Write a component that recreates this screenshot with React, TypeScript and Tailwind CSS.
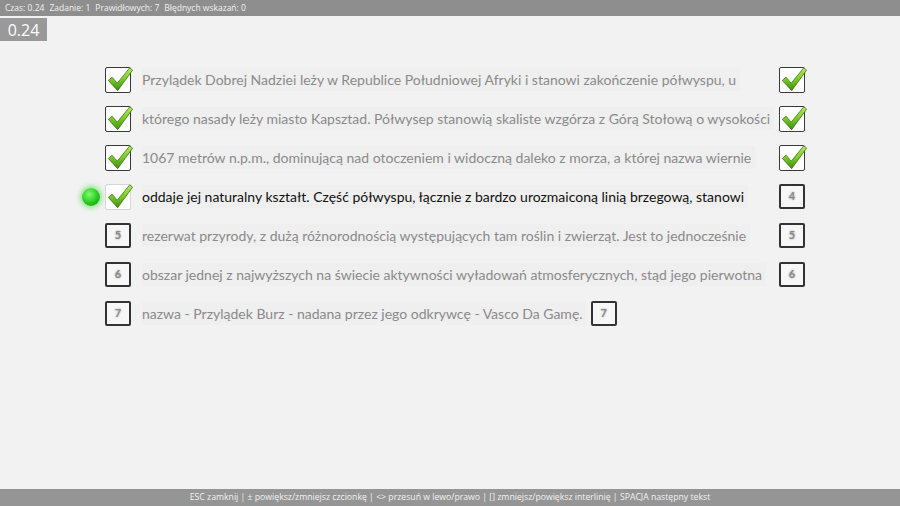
import React from 'react'

const lines = [
  'Przylądek Dobrej Nadziei leży w Republice Południowej Afryki i stanowi zakończenie półwyspu, u',
  'którego nasady leży miasto Kapsztad. Półwysep stanowią skaliste wzgórza z Górą Stołową o wysokości',
  '1067 metrów n.p.m., dominującą nad otoczeniem i widoczną daleko z morza, a której nazwa wiernie',
  'oddaje jej naturalny kształt. Część półwyspu, łącznie z bardzo urozmaiconą linią brzegową, stanowi',
  'rezerwat przyrody, z dużą różnorodnością występujących tam roślin i zwierząt. Jest to jednocześnie',
  'obszar jednej z najwyższych na świecie aktywności wyładowań atmosferycznych, stąd jego pierwotna',
  'nazwa - Przylądek Burz - nadana przez jego odkrywcę - Vasco Da Gamę.',
]

function Check({ light }: { light?: boolean }) {
  return (
    <div
      className={`relative w-[26px] h-[26px] bg-white rounded-[2px] border-[1.5px] ${
        light ? 'border-[#d6d6d6]' : 'border-[#3a3a3a]'
      }`}
    >
      <svg className="absolute left-0 -top-[3px]" width="28" height="28" viewBox="0 0 30 30">
        <defs>
          <linearGradient id="g" x1="0" y1="0" x2="0" y2="1">
            <stop offset="0" stopColor="#b4ee5a" />
            <stop offset="0.55" stopColor="#74c824" />
            <stop offset="1" stopColor="#3f8d0a" />
          </linearGradient>
        </defs>
        <path
          d="M2.5 16.5 L6.5 13 L12 19.5 L25.5 3 L28.5 5.5 L12.5 27.5 Z"
          fill="url(#g)"
          stroke="#3b6a18"
          strokeWidth="0.8"
          strokeLinejoin="round"
        />
      </svg>
    </div>
  )
}

function Num({ n }: { n: number }) {
  return (
    <div className="w-[26px] h-[25px] flex items-center justify-center bg-[#f7f7f7] rounded-[2px] border-2 border-[#333333]">
      <span className="text-[11px] font-bold text-[#8a8a8a] [text-shadow:0_0_2px_#9a9a9a]">{n}</span>
    </div>
  )
}

export default function App() {
  return (
    <div
      className="w-[900px] h-[506px] bg-[#f2f2f2] flex flex-col overflow-hidden"
      style={{ fontFamily: 'Lato, "Open Sans", sans-serif' }}
    >
      <div className="h-[16px] bg-[#8e8e8e] flex items-center px-[5px] text-[8.5px] text-[#f2f2f2] gap-[5px]" style={{ fontFamily: '"Open Sans", sans-serif' }}>
        <span>Czas: 0.24</span>
        <span>Zadanie: 1</span>
        <span>Prawidłowych: 7</span>
        <span>Błędnych wskazań: 0</span>
      </div>
      <div className="mt-[2px] w-[47px] h-[23px] bg-[#999999] text-white text-[16px] flex items-center justify-center" style={{ fontFamily: '"Open Sans", sans-serif' }}>
        0.24
      </div>
      <div className="flex flex-col mt-[19px]">
        {lines.map((t, i) => {
          const done = i < 4
          const active = i === 3
          const last = i === lines.length - 1
          return (
            <div key={i} className="h-[39px] flex items-center">
              <div className="w-[105px] flex justify-end pr-[5px]">
                {active && (
                  <div className="w-[18px] h-[18px] rounded-full bg-[radial-gradient(circle_at_40%_35%,#7dff6a,#1fc21a_60%,#13a010)] shadow-[0_0_5px_2px_rgba(60,220,60,0.55)]" />
                )}
              </div>
              {done ? <Check light={active} /> : <Num n={i + 1} />}
              <div
                className={`ml-[11px] text-[14px] leading-[24px] whitespace-nowrap ${
                  last ? '' : 'w-[628px]'
                } ${active ? 'text-[#111111]' : 'text-[#8a8a8a]'}`}
              >
                <span className="bg-[#efefef] pr-[4px] py-[3px]">{t}</span>
              </div>
              <div className={last ? 'ml-[4px]' : 'ml-[9px]'}>{i < 3 ? <Check /> : <Num n={i + 1} />}</div>
            </div>
          )
        })}
      </div>
      <div className="flex-1" />
      <div className="h-[17px] bg-[#959595] text-[#f2f2f2] text-[8.7px] flex items-center justify-center" style={{ fontFamily: '"Open Sans", sans-serif' }}>
        ESC zamknij | ± powiększ/zmniejsz czcionkę | &lt;&gt; przesuń w lewo/prawo | [] zmniejsz/powiększ interlinię | SPACJA następny tekst
      </div>
    </div>
  )
}
